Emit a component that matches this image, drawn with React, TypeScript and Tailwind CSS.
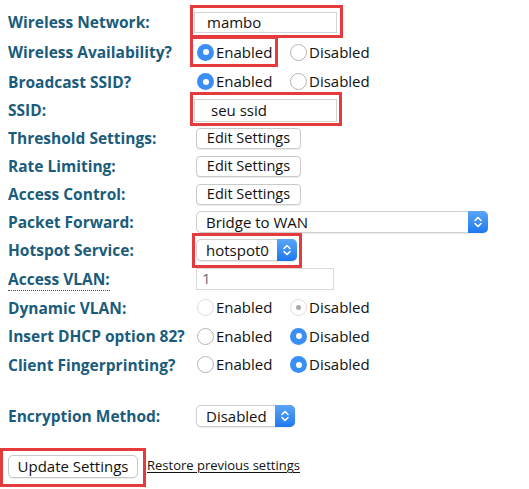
import React from "react";

const font = { fontFamily: '"Open Sans", "Liberation Sans", sans-serif' };

function Radio({ checked, disabled }: { checked?: boolean; disabled?: boolean }) {
  if (checked && !disabled) {
    return (
      <span className="flex h-[17px] w-[17px] shrink-0 items-center justify-center rounded-full bg-[#3b8ef3]">
        <span className="h-[6px] w-[6px] rounded-full bg-white" />
      </span>
    );
  }
  if (checked && disabled) {
    return (
      <span className="flex h-[17px] w-[17px] shrink-0 items-center justify-center rounded-full border border-[#dedede] bg-white">
        <span className="h-[5px] w-[5px] rounded-full bg-[#a8a8a8]" />
      </span>
    );
  }
  return (
    <span
      className={`h-[17px] w-[17px] shrink-0 rounded-full border bg-white ${
        disabled ? "border-[#dedede]" : "border-[#b4b4b4]"
      }`}
    />
  );
}

function RadioPair({ on, disabled, box }: { on: boolean; disabled?: boolean; box?: boolean }) {
  return (
    <div className="ml-[1px] flex items-center text-[15px] text-[#111]">
      <span className="relative flex w-[93px] items-center gap-[2px]">
        <Radio checked={on} disabled={disabled} />
        <span>Enabled</span>
        {box && (
          <span className="pointer-events-none absolute -top-[5px] -bottom-[4px] -left-[7px] right-[12px] border-[3px] border-[#e53b3d]" />
        )}
      </span>
      <span className="flex items-center gap-[2px]">
        <Radio checked={!on} disabled={disabled} />
        <span>Disabled</span>
      </span>
    </div>
  );
}

function EditButton() {
  return (
    <button className="flex h-[21px] w-[105px] items-center justify-center whitespace-nowrap rounded-[4px] border border-[#c9c9c9] bg-white text-[14.5px] text-[#111] shadow-[0_1px_1px_rgba(0,0,0,0.08)]">
      Edit Settings
    </button>
  );
}

function Chevrons() {
  return (
    <svg width="10" height="14" viewBox="0 0 10 14" fill="none" stroke="white" strokeWidth="1.6" strokeLinecap="round" strokeLinejoin="round">
      <path d="M2 5.5 L5 2.5 L8 5.5" />
      <path d="M2 8.5 L5 11.5 L8 8.5" />
    </svg>
  );
}

function Select({ value, w }: { value: string; w: string }) {
  return (
    <div className={`flex h-[22px] ${w} items-center rounded-[5px] border border-[#cfcfcf] bg-white text-[15px] text-[#111] shadow-[0_1px_1px_rgba(0,0,0,0.08)]`}>
      <span className="flex-1 whitespace-nowrap pl-[9px]">{value}</span>
      <span className="-mr-px -my-px flex h-[22px] w-[20px] items-center justify-center rounded-r-[5px] bg-gradient-to-b from-[#5aa5f7] to-[#1c78ef]">
        <Chevrons />
      </span>
    </div>
  );
}

function Row({ h, label, children, dotted }: { h: string; label: string; children?: React.ReactNode; dotted?: boolean }) {
  return (
    <div className={`flex ${h} items-center`}>
      <div className="w-[188px] shrink-0 whitespace-nowrap pt-[2px] text-[15.5px] font-bold text-[#1a5c7b]">
        <span className={dotted ? "border-b border-dotted border-[#1a5c7b]" : ""}>{label}</span>
      </div>
      {children}
    </div>
  );
}

function RedBox({ cls }: { cls: string }) {
  return <span className={`pointer-events-none absolute border-[3px] border-[#e53b3d] ${cls}`} />;
}

export default function App() {
  return (
    <div className="h-[489px] w-[529px] overflow-hidden bg-white pl-[8px] pt-[7px]" style={font}>
      <Row h="h-[30px]" label="Wireless Network:">
        <div className="relative -ml-[2px]">
          <div className="flex h-[21px] w-[143px] items-center border border-[#d4d4d4] bg-white pl-[12px] text-[15px] text-[#111]">
            mambo
          </div>
          <RedBox cls="-top-[7px] -bottom-[5px] -left-[4px] -right-[6px]" />
        </div>
      </Row>
      <Row h="h-[30px]" label="Wireless Availability?">
        <RadioPair on box />
      </Row>
      <Row h="h-[29px]" label="Broadcast SSID?">
        <RadioPair on />
      </Row>
      <Row h="h-[28px]" label="SSID:">
        <div className="relative -ml-[2px]">
          <div className="flex h-[23px] w-[143px] items-center border border-[#d4d4d4] bg-white pl-[16px] text-[15px] text-[#111]">
            seu ssid
          </div>
          <RedBox cls="-top-[7px] -bottom-[4px] -left-[4px] -right-[5px]" />
        </div>
      </Row>
      <Row h="h-[28px]" label="Threshold Settings:">
        <EditButton />
      </Row>
      <Row h="h-[28px]" label="Rate Limiting:">
        <EditButton />
      </Row>
      <Row h="h-[28px]" label="Access Control:">
        <EditButton />
      </Row>
      <Row h="h-[28px]" label="Packet Forward:">
        <Select value="Bridge to WAN" w="w-[292px]" />
      </Row>
      <Row h="h-[28px]" label="Hotspot Service:">
        <div className="relative">
          <Select value="hotspot0" w="w-[101px]" />
          <RedBox cls="-top-[6px] -bottom-[7px] -left-[4px] -right-[5px]" />
        </div>
      </Row>
      <Row h="h-[29px]" label="Access VLAN:" dotted>
        <div className="flex h-[22px] w-[138px] items-center border border-[#dadada] bg-white pl-[5px] text-[15px] text-[#6b6b6b]">
          1
        </div>
      </Row>
      <Row h="h-[29px]" label="Dynamic VLAN:">
        <RadioPair on={false} disabled />
      </Row>
      <Row h="h-[28px]" label="Insert DHCP option 82?">
        <RadioPair on={false} />
      </Row>
      <Row h="h-[29px]" label="Client Fingerprinting?">
        <RadioPair on={false} />
      </Row>
      <div className="h-[23px]" />
      <Row h="h-[28px]" label="Encryption Method:">
        <Select value="Disabled" w="w-[99px]" />
      </Row>
      <div className="h-[22px]" />
      <div className="flex h-[28px] items-center">
        <div className="relative">
          <button className="flex h-[23px] w-[130px] items-center justify-center rounded-[5px] border border-[#c9c9c9] bg-white text-[15px] text-[#111] shadow-[0_1px_1px_rgba(0,0,0,0.08)]">
            Update Settings
          </button>
          <RedBox cls="-top-[7px] -bottom-[9px] -left-[8px] -right-[8px]" />
        </div>
        <a href="#" className="ml-[9px] text-[13px] text-[#111] underline underline-offset-2">
          Restore previous settings
        </a>
      </div>
    </div>
  );
}
